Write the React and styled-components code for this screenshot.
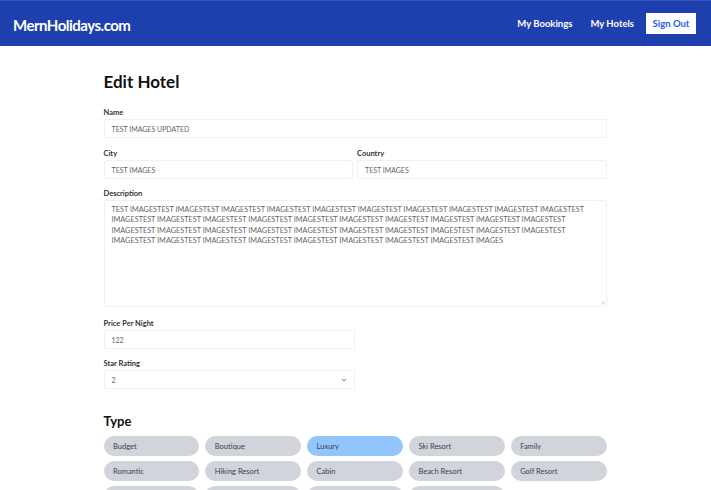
import React from "react"
import styled, { createGlobalStyle } from "styled-components"

const GlobalStyle = createGlobalStyle`
  body {
    margin: 0;
    background: #fff;
    font-family: Lato, "Noto Sans", sans-serif;
  }
`

const Header = styled.header`
  height: 46px;
  background: #1e40af;
  border-top: 1px solid #3456b4;
  box-sizing: border-box;
  display: flex;
  align-items: center;
  justify-content: space-between;
  padding: 0 15px 0 13px;
`

const Logo = styled.div`
  color: #fff;
  font-size: 15px;
  font-weight: 700;
  letter-spacing: -0.5px;
  padding-top: 2px;
`

const Nav = styled.nav`
  display: flex;
  align-items: center;
  gap: 18px;
`

const NavLink = styled.span`
  color: #fff;
  font-size: 9.5px;
  font-weight: 700;
`

const SignOut = styled.button`
  background: #fff;
  color: #2563eb;
  border: none;
  font-family: inherit;
  font-size: 9.5px;
  font-weight: 700;
  height: 21px;
  width: 50px;
  padding: 0;
  margin-left: -6px;
`

const Main = styled.main`
  width: 503px;
  margin: 0 auto;
  padding: 24px 1px 0 0;
  display: flex;
  flex-direction: column;
`

const Title = styled.h1`
  margin: 0 0 15px;
  font-size: 17px;
  line-height: 23px;
  font-weight: 700;
  color: #111;
`

const Row = styled.div`
  display: flex;
  gap: 4px;
  margin-bottom: 10px;
`

const Field = styled.label`
  display: flex;
  flex-direction: column;
  width: ${p => p.$half ? "251px" : "100%"};
  flex: ${p => p.$grow ? 1 : "none"};
  margin-bottom: ${p => p.$mb ?? 10}px;
`

const Label = styled.span`
  font-size: 7.5px;
  font-weight: 700;
  color: #333;
  margin-bottom: 1px;
  line-height: 10px;
`

const Input = styled.div`
  height: 19px;
  box-sizing: border-box;
  border: 1px solid #f0f1f3;
  border-radius: 2px;
  padding: 0 7px;
  display: flex;
  align-items: center;
  justify-content: space-between;
  font-size: 7px;
  color: #666;
`

const TextArea = styled.div`
  height: 107px;
  box-sizing: border-box;
  border: 1px solid #f0f1f3;
  border-radius: 2px;
  padding: 4px 7px;
  font-size: 7.3px;
  line-height: 10.3px;
  color: #666;
  position: relative;
`

const Grip = styled.svg`
  position: absolute;
  right: 1px;
  bottom: 1px;
`

const SubTitle = styled.h2`
  margin: 24px 0 6px;
  font-size: 13px;
  line-height: 17px;
  font-weight: 700;
  color: #111;
`

const PillGrid = styled.div`
  display: grid;
  grid-template-columns: repeat(5, 1fr);
  gap: 5px 6px;
`

const Pill = styled.div`
  height: 20px;
  border-radius: 10px;
  background: ${p => p.$active ? "#93c5fd" : "#d1d5db"};
  display: flex;
  align-items: center;
  padding-left: 9.5px;
  font-size: 7.5px;
  color: #374151;
`

const desc = Array(39).fill("TEST IMAGES").join("")
const types = ["Budget", "Boutique", "Luxury", "Ski Resort", "Family", "Romantic", "Hiking Resort", "Cabin", "Beach Resort", "Golf Resort", "", "", "", ""]

export default function App() {
  return (
    <>
      <GlobalStyle />
      <Header>
        <Logo>MernHolidays.com</Logo>
        <Nav>
          <NavLink>My Bookings</NavLink>
          <NavLink>My Hotels</NavLink>
          <SignOut>Sign Out</SignOut>
        </Nav>
      </Header>
      <Main>
        <Title>Edit Hotel</Title>
        <Field $mb={11}>
          <Label>Name</Label>
          <Input>TEST IMAGES UPDATED</Input>
        </Field>
        <Row>
          <Field $grow $mb={0}>
            <Label>City</Label>
            <Input>TEST IMAGES</Input>
          </Field>
          <Field $grow $mb={0}>
            <Label>Country</Label>
            <Input>TEST IMAGES</Input>
          </Field>
        </Row>
        <Field $mb={12}>
          <Label>Description</Label>
          <TextArea>
            {desc.replace(/TEST IMAGESTEST/g, "TEST IMAGESTEST ").trim()}
            <Grip width="5" height="5" viewBox="0 0 5 5">
              <path d="M4.5 1 L1 4.5 M4.5 3 L3 4.5" stroke="#aaa" strokeWidth="0.6" />
            </Grip>
          </TextArea>
        </Field>
        <Field $half>
          <Label>Price Per Night</Label>
          <Input>122</Input>
        </Field>
        <Field $half $mb={0}>
          <Label>Star Rating</Label>
          <Input>
            2
            <svg width="6" height="4" viewBox="0 0 6 4">
              <path d="M0.8 0.8 L3 3 L5.2 0.8" fill="none" stroke="#555" strokeWidth="0.8" />
            </svg>
          </Input>
        </Field>
        <SubTitle>Type</SubTitle>
        <PillGrid>
          {types.map((t, i) => (
            <Pill key={i} $active={t === "Luxury"}>{t}</Pill>
          ))}
        </PillGrid>
      </Main>
    </>
  )
}
